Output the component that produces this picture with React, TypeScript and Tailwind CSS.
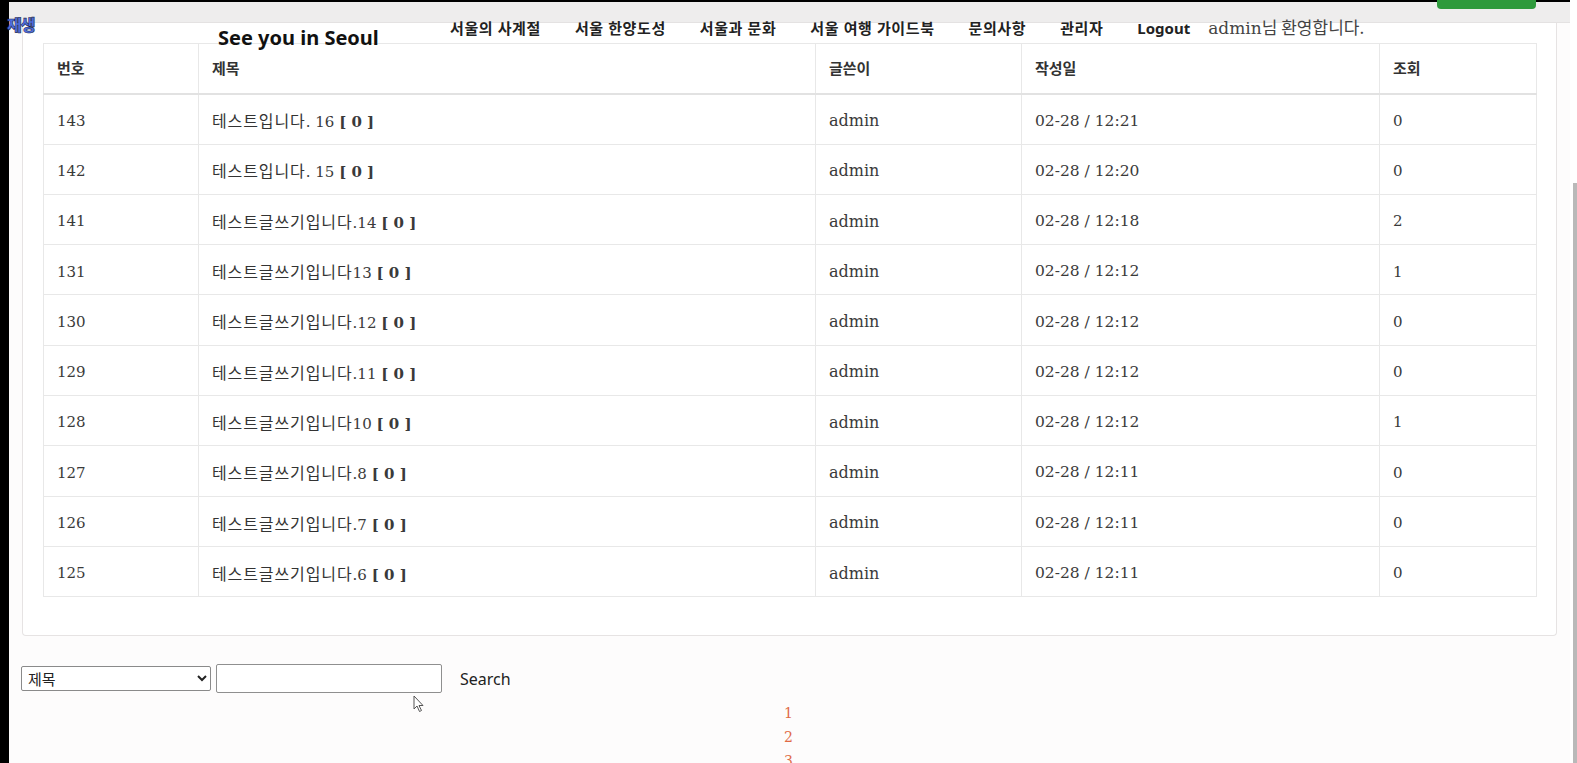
import React from "react";

const rows = [
  { no: "143", ko: "테스트입니다", tail: ". 16", date: "02-28 / 12:21", hit: "0" },
  { no: "142", ko: "테스트입니다", tail: ". 15", date: "02-28 / 12:20", hit: "0" },
  { no: "141", ko: "테스트글쓰기입니다", tail: ".14", date: "02-28 / 12:18", hit: "2" },
  { no: "131", ko: "테스트글쓰기입니다", tail: "13", date: "02-28 / 12:12", hit: "1" },
  { no: "130", ko: "테스트글쓰기입니다", tail: ".12", date: "02-28 / 12:12", hit: "0" },
  { no: "129", ko: "테스트글쓰기입니다", tail: ".11", date: "02-28 / 12:12", hit: "0" },
  { no: "128", ko: "테스트글쓰기입니다", tail: "10", date: "02-28 / 12:12", hit: "1" },
  { no: "127", ko: "테스트글쓰기입니다", tail: ".8", date: "02-28 / 12:11", hit: "0" },
  { no: "126", ko: "테스트글쓰기입니다", tail: ".7", date: "02-28 / 12:11", hit: "0" },
  { no: "125", ko: "테스트글쓰기입니다", tail: ".6", date: "02-28 / 12:11", hit: "0" },
];

const nav = ["서울의 사계절", "서울 한양도성", "서울과 문화", "서울 여행 가이드북", "문의사항", "관리자"];

const serif = "font-['DejaVu_Serif','Noto_Sans_CJK_KR',serif]";
const sans = "font-['Noto_Sans','Noto_Sans_CJK_KR',sans-serif]";
const ko = "font-['Noto_Sans_CJK_KR',sans-serif]";

export default function App() {
  return (
    <div className="relative flex h-[763px] w-full overflow-hidden bg-[#fdfcfc]">
      <div className="w-[9px] shrink-0 bg-black" />
      <div className="flex w-[1561px] shrink-0 flex-col">
        <div className="h-[2px] shrink-0 bg-black" />
        <div className="h-[21px] shrink-0 border-b border-[#e4e2e2] bg-[#eeeded]" />
        <div className="ml-[13px] w-[1535px] shrink-0 rounded-b-[4px] border-x border-b border-[#e6e3e3] bg-white px-[20px] pb-[38px] pt-[20px]">
          <table className={`w-[1493px] table-fixed border-collapse text-[#3a3a3a] ${serif} text-[15px]`}>
            <colgroup>
              <col className="w-[155px]" />
              <col className="w-[617px]" />
              <col className="w-[206px]" />
              <col className="w-[358px]" />
              <col className="w-[157px]" />
            </colgroup>
            <thead>
              <tr className={`h-[50.3px] border-b-2 border-[#e2e2e2] ${sans} text-[15px] font-bold text-[#333]`}>
                {["번호", "제목", "글쓴이", "작성일", "조회"].map((h) => (
                  <th key={h} className="border border-[#e8e8e8] px-[13px] text-left font-bold">
                    {h}
                  </th>
                ))}
              </tr>
            </thead>
            <tbody>
              {rows.map((r) => (
                <tr key={r.no} className="h-[50.3px]">
                  <td className="border border-[#e8e8e8] px-[13px] pt-[4px]">{r.no}</td>
                  <td className="border border-[#e8e8e8] px-[13px] pt-[4px]">
                    <span className={`${ko} text-[16px] tracking-[0.9px] text-[#333]`}>{r.ko}</span>
                    {r.tail} <span className="font-bold">[ 0 ]</span>
                  </td>
                  <td className="border border-[#e8e8e8] px-[13px] pt-[4px] text-[16px]">admin</td>
                  <td className="border border-[#e8e8e8] px-[13px] pt-[4px] text-[15.5px]">{r.date}</td>
                  <td className="border border-[#e8e8e8] px-[13px] pt-[4px]">{r.hit}</td>
                </tr>
              ))}
            </tbody>
          </table>
        </div>
        <div className="mt-[28px] flex shrink-0 items-center pl-[12px]">
          <select className={`h-[25px] w-[190px] rounded-[2px] border border-[#8a8a8a] bg-white px-[2px] text-[15px] text-[#222] ${sans}`}>
            <option>제목</option>
          </select>
          <input className="ml-[5px] h-[29px] w-[226px] rounded-[2px] border border-[#8f8f8f] bg-white" />
          <span className={`ml-[18px] text-[16px] text-[#222] ${sans}`}>Search</span>
        </div>
        <div className={`mt-[8px] flex shrink-0 flex-col items-center pr-[2px] text-[14px] leading-[24px] text-[#e06a45] ${serif}`}>
          <span>1</span>
          <span>2</span>
          <span>3</span>
        </div>
      </div>
      <div className="w-[7px] shrink-0 bg-white" />

      {/* overlay header */}
      <div className={`absolute left-0 top-0 h-[48px] w-full ${sans}`}>
        <span className="absolute left-[7px] top-[13px] text-[16px] font-black tracking-[-1px] text-[#4f6fe2] [-webkit-text-stroke:0.6px_#1c2750]">
          재생
        </span>
        <span className="absolute left-[218px] top-[23px] text-[20px] font-bold text-[#111]">See you in Seoul</span>
        <div className="absolute left-[450px] top-[14px] flex items-center text-[15px] font-bold text-[#222]">
          {nav.map((n) => (
            <span key={n} className="mr-[34px] tracking-[0.6px]">
              {n}
            </span>
          ))}
          <span className="mr-[18px] text-[15px]">Logout</span>
          <span className={`${serif} text-[17px] font-normal text-[#444]`}>
            admin<span className={`${ko}`}>님 환영합니다.</span>
          </span>
        </div>
        <div className="absolute left-[1437px] top-0 h-[9px] w-[99px] rounded-b-[4px] bg-[#2e9a3c]" />
      </div>

      {/* scrollbar thumb */}
      <div className="absolute right-0 top-[183px] h-[580px] w-[4px] bg-[#b9b9b9]" />

      {/* mouse cursor */}
      <svg className="absolute left-[413px] top-[695px]" width="12" height="18" viewBox="0 0 12 18">
        <path d="M1 1 L1 14 L4 11 L6.5 16.5 L8.5 15.5 L6 10.5 L10 10.5 Z" fill="#fff" stroke="#555" strokeWidth="1" />
      </svg>
    </div>
  );
}
